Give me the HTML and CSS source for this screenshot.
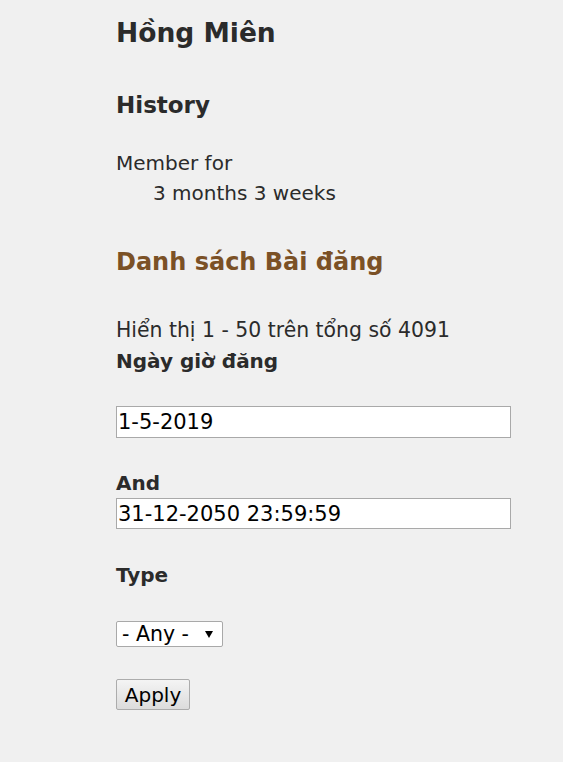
FILE: index.html
```html
<!DOCTYPE html>
<html>
<head>
  <meta charset="utf-8">
  <link rel="stylesheet" href="styles.css">
</head>
<body>
  <div class="trang">
    <h1 class="ten">Hồng Miên</h1>

    <h2 class="muc">History</h2>
    <dl class="lich-su">
      <dt>Member for</dt>
      <dd>3 months 3 weeks</dd>
    </dl>

    <h2 class="tieu-de-nau">Danh sách Bài đăng</h2>
    <p class="tong-so">Hiển thị 1 - 50 trên tổng số 4091</p>

    <form class="bo-loc">
      <label class="nhan" for="tu-ngay">Ngày giờ đăng</label>
      <input class="o-nhap o-dau" id="tu-ngay" type="text" value="1-5-2019">

      <label class="nhan nhan-and" for="den-ngay">And</label>
      <input class="o-nhap o-hai" id="den-ngay" type="text" value="31-12-2050 23:59:59">

      <label class="nhan nhan-type" for="loai">Type</label>
      <div class="chon-wrap">
        <select class="chon" id="loai">
          <option>- Any -</option>
        </select>
      </div>

      <div class="nut-wrap">
        <button class="nut" type="button">Apply</button>
      </div>
    </form>
  </div>
</body>
</html>
```

FILE: styles.css
```css
/* nền chung */
body {
  margin: 0;
  background: #f0f0f0;
  color: #2b2b2b;
  font-family: "DejaVu Sans", Verdana, sans-serif;
  font-size: 20px;
  line-height: 31px;
}

.trang {
  padding: 0 0 40px 116px;
  width: 395px;
}

/* tiêu đề */
.ten {
  font-size: 26.5px;
  line-height: 34px;
  margin: 16px 0 0 0;
}

.muc {
  font-size: 23px;
  line-height: 30px;
  margin: 40px 0 0 0;
}

.lich-su {
  margin: 28px 0 0 0;
  line-height: 30px;
}

.lich-su dd {
  margin-left: 37px;
}

.tieu-de-nau {
  color: #7b5126;
  font-size: 24px;
  line-height: 34px;
  margin: 37px 0 0 0;
}

.tong-so {
  font-size: 20.4px;
  margin: 36px 0 0 0;
}

/* bộ lọc */
.bo-loc {
  display: flex;
  flex-direction: column;
  align-items: flex-start;
}

.nhan {
  font-weight: bold;
}

.o-nhap {
  box-sizing: border-box;
  width: 395px;
  height: 32px;
  border: 1px solid #a9a9a9;
  background: #fff;
  font-family: "DejaVu Sans", Verdana, sans-serif;
  font-size: 21px;
  color: #000;
  padding: 0 1px;
  margin: 0;
}

.o-dau {
  margin-top: 29px;
}

.o-hai {
  height: 31px;
}

.nhan-and {
  margin-top: 30px;
  line-height: 30px;
}

.nhan-type {
  margin-top: 31px;
}

.chon-wrap {
  margin-top: 30px;
}

.chon {
  display: block;
  -webkit-appearance: none;
  appearance: none;
  box-sizing: border-box;
  height: 26px;
  width: 107px;
  padding: 0 0 0 5px;
  font-family: "DejaVu Sans", Verdana, sans-serif;
  font-size: 20.5px;
  line-height: 24px;
  background: #fff url("data:image/svg+xml;utf8,<svg xmlns='http://www.w3.org/2000/svg' width='8' height='7'><path d='M0 0h8L4 7z' fill='%23000'/></svg>") no-repeat right 9px center;
  border: 1px solid #a9a9a9;
  border-radius: 2px;
  color: #000;
}

.nut-wrap {
  margin-top: 32px;
}

.nut {
  display: block;
  box-sizing: border-box;
  height: 31px;
  width: 74px;
  padding: 0;
  font-family: "DejaVu Sans", Verdana, sans-serif;
  font-size: 20px;
  color: #000;
  background: linear-gradient(#f4f4f4, #dcdcdc);
  border: 1px solid #acacac;
  border-radius: 2px;
}
```
